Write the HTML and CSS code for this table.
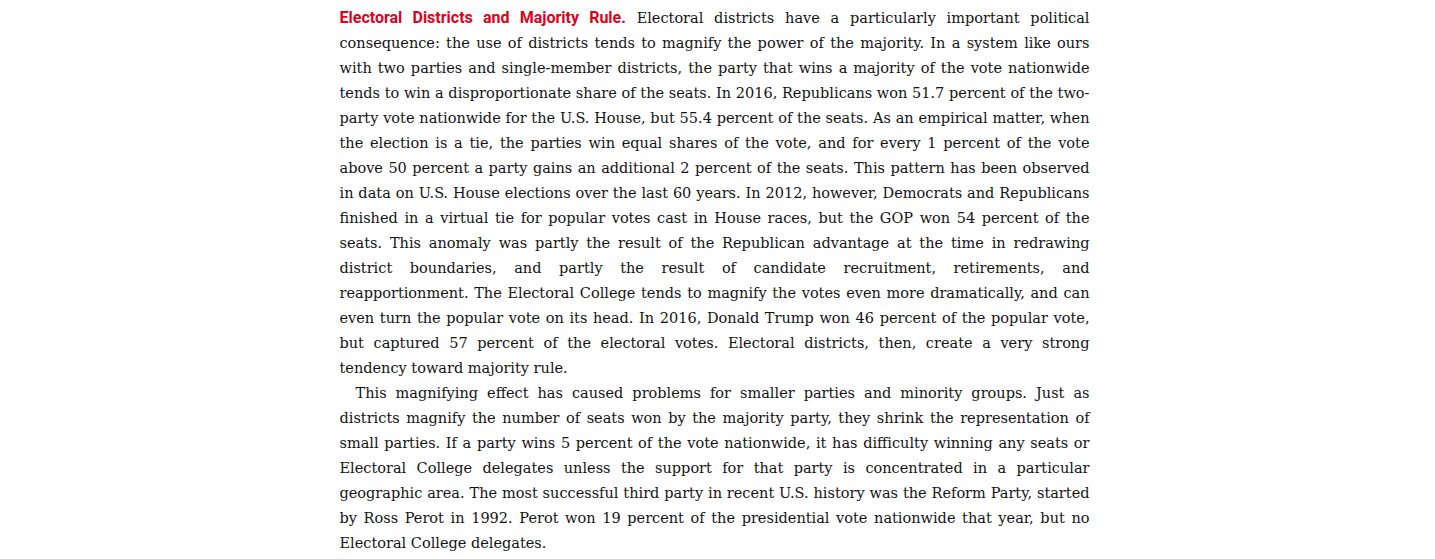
FILE: index.html
```html
<!DOCTYPE html>
<html lang="en">
<head>
<meta charset="utf-8">
<title>Electoral Districts and Majority Rule</title>
<link rel="stylesheet" href="styles.css">
</head>
<body>
<main class="page">
  <section class="text">
    <p class="para"><strong class="lead">Electoral Districts and Majority Rule.</strong> Electoral districts have a particularly important political consequence: the use of districts tends to magnify the power of the majority. In a system like ours with two parties and single-member districts, the party that wins a majority of the vote nationwide tends to win a disproportionate share of the seats. In 2016, Republicans won 51.7 percent of the two-party vote nationwide for the U.S. House, but 55.4 percent of the seats. As an empirical matter, when the election is a tie, the parties win equal shares of the vote, and for every 1 percent of the vote above 50 percent a party gains an additional 2 percent of the seats. This pattern has been observed in data on U.S. House elections over the last 60 years. In 2012, however, Democrats and Republicans finished in a virtual tie for popular votes cast in House races, but the GOP won 54 percent of the seats. This anomaly was partly the result of the Republican advantage at the time in redrawing district boundaries, and partly the result of candidate recruitment, retirements, and reapportionment. The Electoral College tends to magnify the votes even more dramatically, and can even turn the popular vote on its head. In 2016, Donald Trump won 46 percent of the popular vote, but captured 57 percent of the electoral votes. Electoral districts, then, create a very strong tendency toward majority rule.</p>
    <p class="para indent">This magnifying effect has caused problems for smaller parties and minority groups. Just as districts magnify the number of seats won by the majority party, they shrink the representation of small parties. If a party wins 5 percent of the vote nationwide, it has difficulty winning any seats or Electoral College delegates unless the support for that party is concentrated in a particular geographic area. The most successful third party in recent U.S. history was the Reform Party, started by Ross Perot in 1992. Perot won 19 percent of the presidential vote nationwide that year, but no Electoral College delegates.</p>
  </section>
</main>
</body>
</html>
```
FILE: styles.css
```css
html, body {
  margin: 0;
  padding: 0;
  background: #ffffff;
}
.page {
  display: flex;
  justify-content: center;
  padding-top: 5px;
}
.text {
  width: 750px;
  margin-left: -6px;
}
.para {
  margin: 0;
  font-family: "DejaVu Serif", serif;
  font-size: 14.5px;
  line-height: 25px;
  color: #141414;
  text-align: justify;
}
.indent {
  text-indent: 16px;
}
.lead {
  font-family: Roboto, "Liberation Sans", sans-serif;
  font-weight: 700;
  font-size: 16px;
  color: #e3001b;
}
```
